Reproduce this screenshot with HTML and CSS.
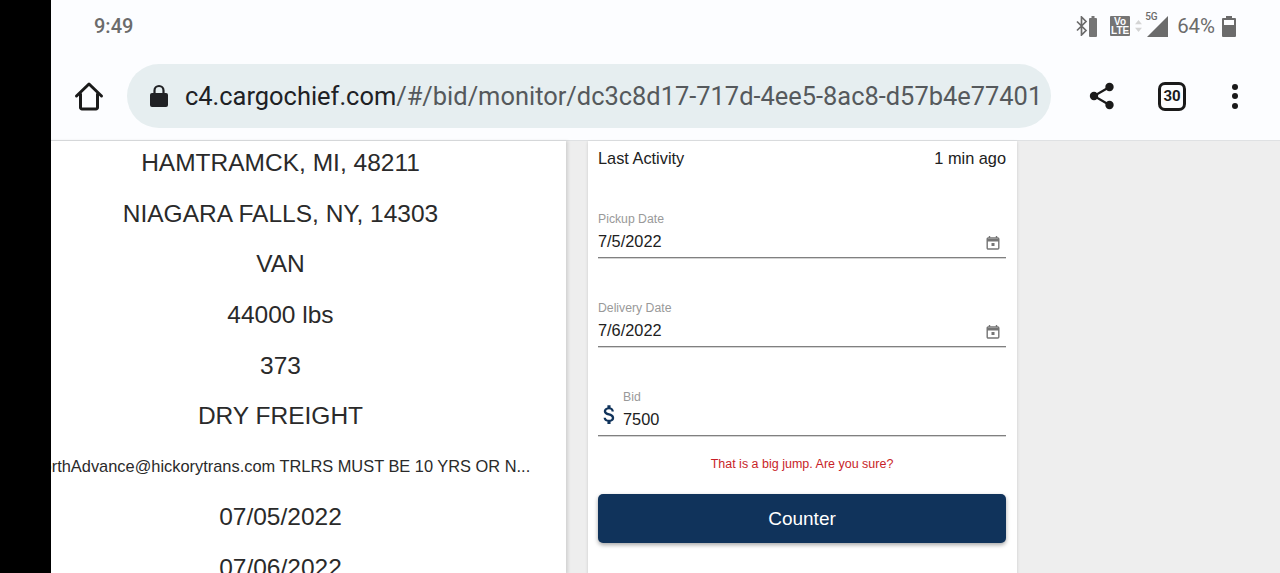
FILE: index.html
```html
<!doctype html>
<html lang="en">
<head>
    <meta charset="utf-8">
    <title>Bid Monitor</title>
    <link rel="stylesheet" href="styles.css">
</head>
<body>
<div class="cutout"></div>
<div class="phone">
    <div class="status-bar">
        <span class="clock">9:49</span>
        <div class="status-icons">
            <svg class="ic-bt" width="12" height="20" viewBox="0 0 12 20"><path d="M1 5.500l9 9-4.500 4.500V1l4.500 4.500-9 9" fill="none" stroke="#6b6b6b" stroke-width="1.700"/></svg>
            <svg class="ic-cell" width="8" height="21" viewBox="0 0 8 21"><path d="M2.500 0h3v2H7a1 1 0 0 1 1 1v17a1 1 0 0 1-1 1H1a1 1 0 0 1-1-1V3a1 1 0 0 1 1-1h1.500z" fill="#757575"/></svg>
            <span class="volte"><span>Vo</span><span>LTE</span></span>
            <svg class="ic-arrows" width="7" height="12" viewBox="0 0 8 14"><path d="M4 0l4 5H0z" fill="#d4d4d4"/><path d="M4 14l4-5H0z" fill="#d4d4d4"/></svg>
            <div class="signal">
                <span class="five-g">5G</span>
                <svg width="21" height="21" viewBox="0 0 22 22"><path d="M22 0v22H0z" fill="#6b6b6b"/></svg>
            </div>
            <span class="percent">64%</span>
            <svg class="ic-batt" width="14" height="21" viewBox="0 0 14 21"><path d="M4 0h6v2h3a1 1 0 0 1 1 1v17a1 1 0 0 1-1 1H1a1 1 0 0 1-1-1V3a1 1 0 0 1 1-1h3z" fill="#6b6b6b"/><rect x="2" y="4" width="10" height="5" fill="#fcfdff"/></svg>
        </div>
    </div>
    <div class="toolbar">
        <svg class="ic-home" width="30" height="30" viewBox="0 0 30 30"><path d="M2.500 15L15 3l12.500 12M6.500 13v13.500a1.500 1.500 0 0 0 1.500 1.500h14a1.500 1.500 0 0 0 1.500-1.500V13" fill="none" stroke="#1a1a1a" stroke-width="3" stroke-linejoin="round" stroke-linecap="round"/></svg>
        <div class="omnibox">
            <svg class="ic-lock" width="18" height="24" viewBox="0 0 18 24"><path d="M4.500 10V6.500a4.500 4.500 0 0 1 9 0V10" fill="none" stroke="#202124" stroke-width="2.200"/><rect y="9" width="18" height="14" rx="2" fill="#202124"/></svg>
            <span class="url"><span class="url-host">c4.cargochief.com</span>/#/bid/monitor/dc3c8d17-717d-4ee5-8ac8-d57b4e77401</span>
        </div>
        <svg class="ic-share" width="26" height="28" viewBox="0 0 26 28"><path d="M20.500 5L5 14l15.500 9" fill="none" stroke="#1a1a1a" stroke-width="2.200"/><circle cx="20.500" cy="5" r="4.200" fill="#1a1a1a"/><circle cx="5" cy="14" r="4.200" fill="#1a1a1a"/><circle cx="20.500" cy="23" r="4.200" fill="#1a1a1a"/></svg>
        <div class="tabs">30</div>
        <div class="kebab"><i></i><i></i><i></i></div>
    </div>
    <div class="page">
        <div class="details">
            <div class="row">HAMTRAMCK, MI, 48211</div>
            <div class="row">NIAGARA FALLS, NY, 14303</div>
            <div class="row">VAN</div>
            <div class="row">44000 lbs</div>
            <div class="row">373</div>
            <div class="row">DRY FREIGHT</div>
            <div class="row row-small">NorthAdvance@hickorytrans.com TRLRS MUST BE 10 YRS OR N...</div>
            <div class="row">07/05/2022</div>
            <div class="row">07/06/2022</div>
        </div>
        <div class="card">
            <div class="activity">
                <span>Last Activity</span>
                <span>1 min ago</span>
            </div>
            <div class="field field-date">
                <label>Pickup Date</label>
                <div class="field-input">
                    <span>7/5/2022</span>
                    <svg class="ic-cal" width="14" height="14" viewBox="0 0 14 14"><path d="M3.500 0v2M10.500 0v2" stroke="#757575" stroke-width="1.400"/><rect x="1.200" y="2" width="11.600" height="11" rx="1" fill="none" stroke="#757575" stroke-width="1.400"/><path d="M1 3h12v2.500H1z" fill="#757575"/><rect x="5.500" y="7" width="3" height="3" fill="#757575"/></svg>
                </div>
            </div>
            <div class="field field-date">
                <label>Delivery Date</label>
                <div class="field-input">
                    <span>7/6/2022</span>
                    <svg class="ic-cal" width="14" height="14" viewBox="0 0 14 14"><path d="M3.500 0v2M10.500 0v2" stroke="#757575" stroke-width="1.400"/><rect x="1.200" y="2" width="11.600" height="11" rx="1" fill="none" stroke="#757575" stroke-width="1.400"/><path d="M1 3h12v2.500H1z" fill="#757575"/><rect x="5.500" y="7" width="3" height="3" fill="#757575"/></svg>
                </div>
            </div>
            <div class="field field-bid">
                <svg class="ic-dollar" width="25" height="25" viewBox="0 0 24 24"><path d="M11.800 10.900c-2.270-.59-3-1.200-3-2.150 0-1.090 1.010-1.850 2.700-1.850 1.780 0 2.440.85 2.500 2.100h2.210c-.07-1.720-1.120-3.300-3.210-3.810V3h-3v2.160c-1.940.42-3.500 1.680-3.500 3.610 0 2.310 1.910 3.460 4.700 4.130 2.500.6 3 1.480 3 2.410 0 .69-.49 1.790-2.700 1.790-2.060 0-2.870-.92-2.980-2.100h-2.200c.12 2.190 1.760 3.420 3.680 3.830V21h3v-2.150c1.950-.37 3.500-1.500 3.500-3.550 0-2.840-2.430-3.810-4.700-4.400z" fill="#10335b"/></svg>
                <div class="bid-body">
                    <label>Bid</label>
                    <span class="bid-value">7500</span>
                </div>
            </div>
            <p class="warning">That is a big jump. Are you sure?</p>
            <button type="button" class="counter">Counter</button>
        </div>
    </div>
</div>
</body>
</html>
```
FILE: styles.css
```css
html, body {
    margin: 0;
    height: 573px;
    overflow: hidden;
}

body {
    display: flex;
    background: #000;
    font-family: "Liberation Sans", Arial, sans-serif;
    color: #212121;
}

.cutout {
    width: 51px;
    flex: none;
}

.phone {
    flex: 1;
    min-width: 0;
    display: flex;
    flex-direction: column;
    background: #eeeeee;
    overflow: hidden;
}

/* status bar */
.status-bar {
    height: 52px;
    flex: none;
    display: flex;
    align-items: center;
    justify-content: space-between;
    padding: 0 44px 0 43px;
    background: #fcfdff;
    font-family: Roboto, sans-serif;
    color: #6b6b6b;
}

.clock {
    font-size: 20px;
    font-weight: 500;
}

.status-icons {
    display: flex;
    align-items: center;
}

.ic-cell {
    margin-left: 1px;
}

.volte {
    width: 20px;
    height: 20px;
    margin-left: 13px;
    background: #757575;
    color: #fcfdff;
    font: 700 10px/9.500px "Liberation Sans", sans-serif;
    display: flex;
    flex-direction: column;
    align-items: center;
    justify-content: center;
    border-radius: 1px;
}

.ic-arrows {
    margin-left: 5px;
}

.signal {
    position: relative;
    width: 21px;
    height: 21px;
    margin-left: 5px;
    margin-top: 1px;
    display: flex;
}

.five-g {
    position: absolute;
    top: -5px;
    left: -2px;
    font-size: 10px;
    font-weight: 500;
    line-height: 12px;
}

.percent {
    margin-left: 9px;
    font-size: 20.400px;
}

.ic-batt {
    margin-left: 7px;
}

/* browser toolbar */
.toolbar {
    height: 88px;
    flex: none;
    display: flex;
    align-items: center;
    background: #fcfdff;
    border-bottom: 1px solid #dfe1e3;
}

.ic-home {
    flex: none;
    margin-left: 23px;
}

.omnibox {
    width: 924px;
    height: 64px;
    margin-left: 23px;
    flex: none;
    display: flex;
    align-items: center;
    background: #e6eef0;
    border-radius: 32px;
    padding-left: 23px;
    box-sizing: border-box;
}

.ic-lock {
    flex: none;
}

.url {
    margin-left: 17px;
    font-family: Roboto, sans-serif;
    font-size: 25.430px;
    color: #55595c;
    white-space: nowrap;
}

.url-host {
    color: #202124;
}

.ic-share {
    flex: none;
    margin-left: 38px;
}

.tabs {
    flex: none;
    width: 22px;
    height: 23px;
    margin-left: 43px;
    border: 3px solid #1a1a1a;
    border-radius: 7px;
    display: flex;
    align-items: center;
    justify-content: center;
    font: 700 15px "Roboto", sans-serif;
    color: #1a1a1a;
}

.kebab {
    flex: none;
    margin-left: 46px;
    display: flex;
    flex-direction: column;
    gap: 3.500px;
}

.kebab i {
    display: block;
    width: 6px;
    height: 6px;
    border-radius: 50%;
    background: #1a1a1a;
}

/* page content */
.page {
    flex: 1;
    min-height: 0;
    display: flex;
    align-items: flex-start;
}

.details {
    flex: none;
    width: 571px;
    margin-left: -56px;
    height: 433px;
    background: #fff;
    box-shadow: 2px 0 3px rgba(0, 0, 0, 0.12);
    overflow: hidden;
}

.row {
    height: 50.600px;
    display: flex;
    align-items: center;
    justify-content: center;
    font-size: 24.500px;
    white-space: nowrap;
    color: #2a2a2a;
}

.row:first-child {
    margin-top: -3px;
}

.row-small {
    font-size: 16.400px;
}

.card {
    width: 408px;
    height: 433px;
    margin-left: 22px;
    padding: 0 11px 0 10px;
    flex: none;
    background: #fff;
    box-shadow: 0 1px 3px rgba(0, 0, 0, 0.15);
}

.activity {
    height: 35px;
    margin-bottom: 36px;
    display: flex;
    align-items: center;
    justify-content: space-between;
    font-size: 16.330px;
    color: #212121;
}

.field label {
    display: block;
    font-size: 12.240px;
    line-height: 14px;
    color: #999999;
}

.field-date {
    border-bottom: 1px solid #808080;
    box-shadow: 0 1px 0 #d4d4d4;
    margin-bottom: 43px;
}

.field-input {
    height: 31px;
    display: flex;
    align-items: center;
    justify-content: space-between;
    font-size: 16.330px;
}

.ic-cal {
    margin-right: 6px;
    margin-top: 3px;
}

.field-bid {
    display: flex;
    align-items: flex-end;
    border-bottom: 1px solid #808080;
    box-shadow: 0 1px 0 #d4d4d4;
}

.ic-dollar {
    flex: none;
    margin: 0 1px 8px -1px;
}

.bid-body {
    display: flex;
    flex-direction: column;
}

.bid-value {
    font-size: 16.330px;
    line-height: 31px;
}

.warning {
    margin: 20px 0 0;
    text-align: center;
    font-size: 12.500px;
    line-height: 16px;
    color: #c81e28;
}

.counter {
    display: block;
    width: 100%;
    height: 49px;
    margin-top: 22px;
    padding: 0;
    border: none;
    border-radius: 5px;
    background: #10335b;
    color: #fff;
    font: 19px "Liberation Sans", sans-serif;
    box-shadow: 0 2px 4px rgba(0, 0, 0, 0.35);
}
```
